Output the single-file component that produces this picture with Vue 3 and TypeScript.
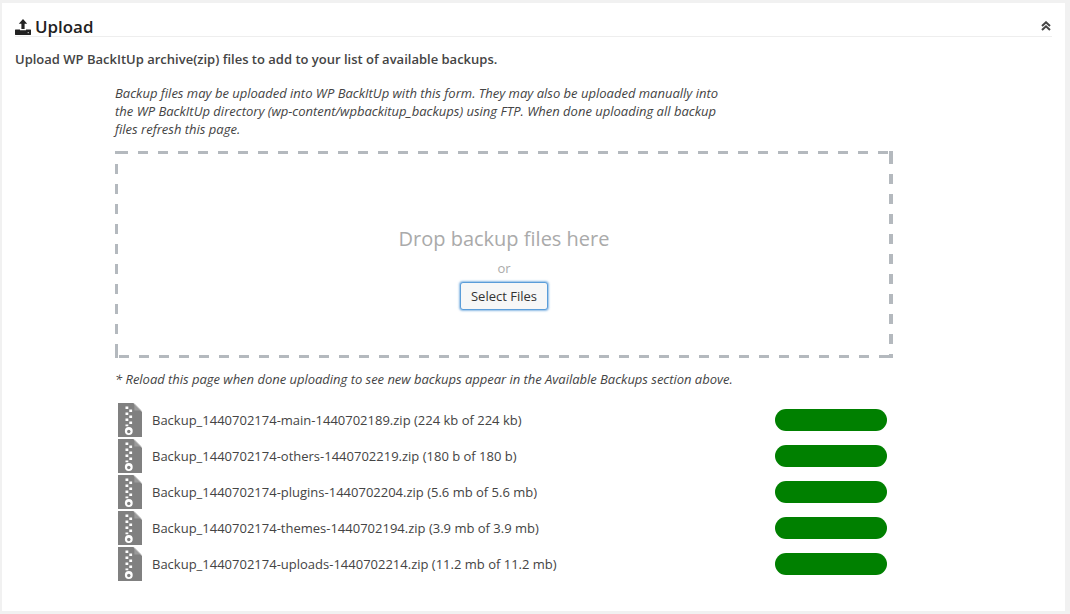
<script setup lang="ts">
interface Item { name: string; size: string }
const items: Item[] = [
  { name: 'Backup_1440702174-main-1440702189.zip', size: '(224 kb of 224 kb)' },
  { name: 'Backup_1440702174-others-1440702219.zip', size: '(180 b of 180 b)' },
  { name: 'Backup_1440702174-plugins-1440702204.zip', size: '(5.6 mb of 5.6 mb)' },
  { name: 'Backup_1440702174-themes-1440702194.zip', size: '(3.9 mb of 3.9 mb)' },
  { name: 'Backup_1440702174-uploads-1440702214.zip', size: '(11.2 mb of 11.2 mb)' },
]
</script>

<template>
  <div class="page">
    <section class="panel">
      <header class="head">
        <h3 class="title">
          <svg class="up" viewBox="0 0 16 16" width="16" height="16">
            <path fill="#222" d="M8 0 L12.2 4.8 H9.6 V10 H6.4 V4.8 H3.8 Z" />
            <path fill="#222" d="M0.5 10.4 H5 V11.2 H11 V10.4 H15.5 C15.8 10.4 16 10.6 16 11 V15.5 C16 15.8 15.8 16 15.5 16 H0.5 C0.2 16 0 15.8 0 15.5 V11 C0 10.6 0.2 10.4 0.5 10.4 Z" />
            <rect x="12.6" y="13" width="1.4" height="1.2" fill="#aaa" />
          </svg>
          <span>Upload</span>
        </h3>
        <svg class="chev" viewBox="0 0 10 10" width="10" height="10">
          <path fill="none" stroke="#444" stroke-width="2" d="M1 5 L5 1.3 L9 5 M1 9 L5 5.3 L9 9" />
        </svg>
      </header>
      <p class="lead">Upload WP BackItUp archive(zip) files to add to your list of available backups.</p>
      <div class="body">
        <p class="note">Backup files may be uploaded into WP BackItUp with this form. They may also be uploaded manually into the WP BackItUp directory (wp-content/wpbackitup_backups) using FTP. When done uploading all backup files refresh this page.</p>
        <div class="drop">
          <div class="drop-title">Drop backup files here</div>
          <div class="or">or</div>
          <button class="select" type="button">Select Files</button>
        </div>
        <p class="reload">* Reload this page when done uploading to see new backups appear in the Available Backups section above.</p>
        <ul class="files">
          <li v-for="item in items" :key="item.name" class="file">
            <svg class="zip" viewBox="0 0 24 34" width="24" height="34">
              <path fill="#808080" d="M0 0 H15.5 L24 8.5 V34 H0 Z" />
              <path fill="#9a9a9a" d="M16.4 0.6 L23.4 7.6 H16.4 Z" />
              <path fill="none" stroke="#e8e8e8" stroke-width="0.7" d="M15.6 0 L24 8.4" />
              <path fill="#fff" d="M7.5 3.5 h2.8 v2.4 h-2.8 Z M11.3 6.5 h2.8 v2.4 h-2.8 Z M7.5 9.5 h2.8 v2.4 h-2.8 Z M11.3 12.5 h2.8 v2.4 h-2.8 Z M7.5 15.5 h2.8 v2.4 h-2.8 Z M11.3 18.5 h2.8 v2.4 h-2.8 Z M7.5 21.5 h2.8 v1.8 h-2.8 Z" />
              <circle cx="10.8" cy="28" r="3.9" fill="#fff" />
              <circle cx="10.8" cy="28.5" r="1.7" fill="#808080" />
            </svg>
            <span class="fname">{{ item.name }} {{ item.size }}</span>
            <span class="bar"></span>
          </li>
        </ul>
      </div>
    </section>
  </div>
</template>

<style>
html, body { margin: 0; background: #f1f1f1; }
</style>

<style scoped>
.page {
  width: 1070px;
  height: 614px;
  box-sizing: border-box;
  padding: 3px 5px 3px 2px;
  font-family: "Open Sans", sans-serif;
  color: #444;
  overflow: hidden;
}
.panel {
  height: 100%;
  background: #fff;
  box-sizing: border-box;
  padding: 0 13px;
}
.head {
  height: 33px;
  border-bottom: 1px solid #eee;
  display: flex;
  align-items: center;
  justify-content: space-between;
}
.title {
  margin: 0;
  display: flex;
  align-items: center;
  gap: 4px;
  font-size: 16.9px;
  font-weight: 600;
  color: #222;
  line-height: 24px;
  padding-top: 14px;
}
.up { display: block; }
.chev { margin-right: 1px; margin-top: 13px; }
.lead {
  margin: 12px 0 0;
  font-size: 13px;
  line-height: 20px;
  font-weight: 600;
  color: #444;
}
.body {
  margin: 15px 0 0 100px;
  width: 778px;
}
.note {
  margin: 0;
  width: 610px;
  font-size: 13px;
  line-height: 18px;
  font-style: italic;
  color: #444;
}
.drop {
  --dash: #b4b9be;
  margin-top: 13px;
  height: 207px;
  box-sizing: border-box;
  text-align: center;
  padding-top: 74px;
  background-image:
    linear-gradient(var(--dash), var(--dash)),
    linear-gradient(var(--dash), var(--dash)),
    linear-gradient(var(--dash), var(--dash)),
    linear-gradient(var(--dash), var(--dash)),
    linear-gradient(90deg, var(--dash) 50%, transparent 50%),
    linear-gradient(90deg, var(--dash) 50%, transparent 50%),
    linear-gradient(var(--dash) 50%, transparent 50%),
    linear-gradient(var(--dash) 50%, transparent 50%);
  background-size:
    13px 3px,
    14px 3px,
    3px 14px,
    4px 13px,
    20px 3px,
    20px 3px,
    3px 20px,
    4px 20px;
  background-position:
    0 0,
    100% 100%,
    0 100%,
    100% 0,
    3px 0,
    4px 100%,
    0 13px,
    100% 3px;
  background-repeat:
    no-repeat, no-repeat, no-repeat, no-repeat,
    repeat-x, repeat-x, repeat-y, repeat-y;
}
.drop-title {
  font-size: 20px;
  line-height: 28px;
  color: #aaa;
}
.or {
  font-size: 13px;
  line-height: 18px;
  color: #aaa;
  margin-top: 6px;
}
.select {
  display: block;
  margin: 5px auto 0;
  width: 88px;
  height: 28px;
  box-sizing: border-box;
  background: #f7f7f7;
  border: 1px solid #5b9dd9;
  border-radius: 3px;
  box-shadow: 0 0 2px 1px rgba(91, 157, 217, 0.7);
  font-family: inherit;
  font-size: 13px;
  color: #333;
  padding: 0;
}
.reload {
  margin: 12px 0 0;
  font-size: 13px;
  line-height: 18px;
  font-style: italic;
  white-space: nowrap;
  letter-spacing: -0.02px;
}
.files {
  list-style: none;
  margin: 14px 0 0;
  padding: 0;
}
.file {
  display: flex;
  align-items: center;
  height: 36px;
}
.zip { margin-left: 3px; flex: none; }
.fname {
  margin-left: 10px;
  font-size: 13px;
  color: #444;
  flex: 1;
  white-space: nowrap;
}
.bar {
  width: 112px;
  height: 22px;
  border-radius: 11px;
  background: #008000;
  margin-right: 6px;
  flex: none;
}
</style>
